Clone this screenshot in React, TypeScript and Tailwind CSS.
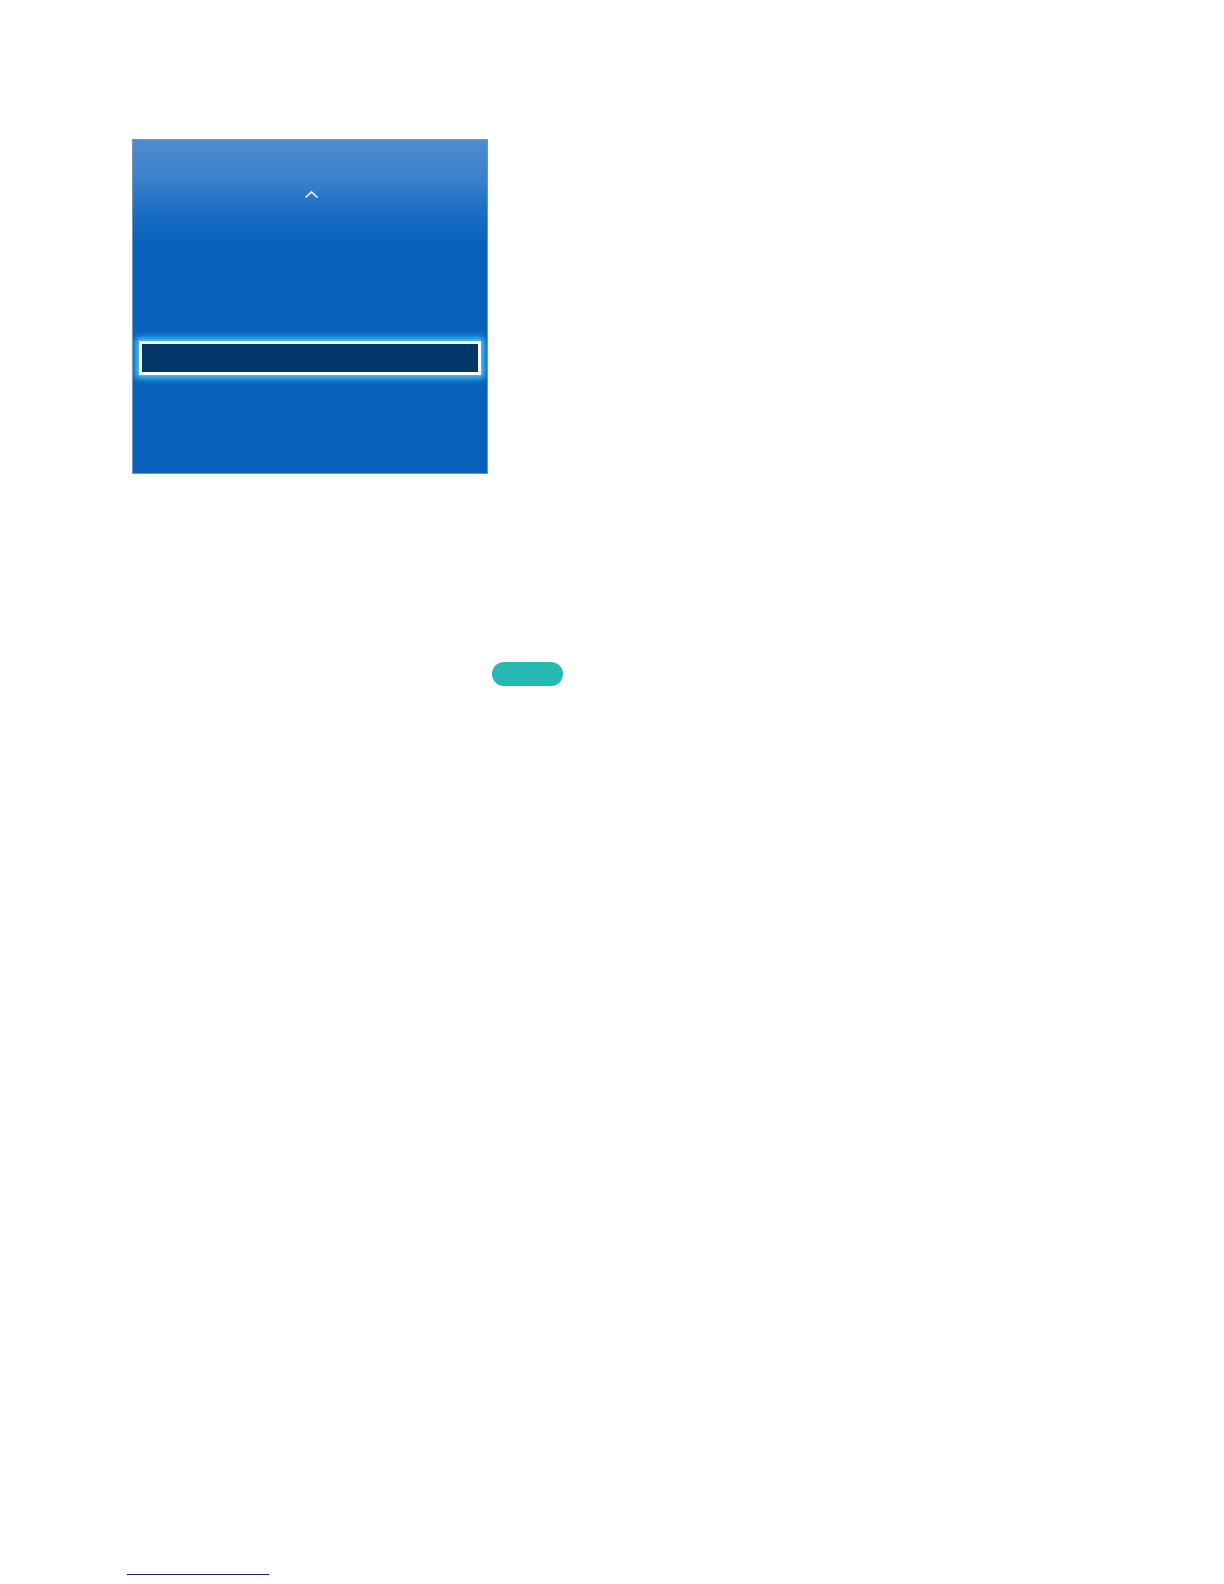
export default function App() {
  return (
    <div className="relative flex h-[1584px] w-[1224px] flex-col bg-white font-['Liberation_Sans',sans-serif]">
      <div className="ml-[132px] mt-[139px] flex h-[335px] w-[356px] flex-col border border-[#7d90aa] bg-[linear-gradient(180deg,#4d8dd2_0%,#3a80cc_12%,#1a6dc3_22%,#0862bc_31%,#0862bc_100%)]">
        <div className="flex h-[58px] items-end justify-center pl-[2px]">
          <svg width="15" height="9" viewBox="0 0 15 9" className="mb-[-1px]">
            <path d="M1.5 7.5 L7.5 1.8 L13.5 7.5" fill="none" stroke="#e6f0fb" strokeWidth="1.6" />
          </svg>
        </div>
        <div className="mt-[143px] px-[6px]">
          <div className="h-[34px] border-[3px] border-white bg-[#04366a] shadow-[0_0_6px_3px_#4fd0ff]" />
        </div>
      </div>

      <div className="ml-[492px] mt-[188px] h-[24px] w-[71px] rounded-full bg-[#26b8b2]" />

      <div className="mt-auto mb-[9px] ml-[127px] h-px w-[142px] bg-[#1c1c8a]" />
    </div>
  );
}
